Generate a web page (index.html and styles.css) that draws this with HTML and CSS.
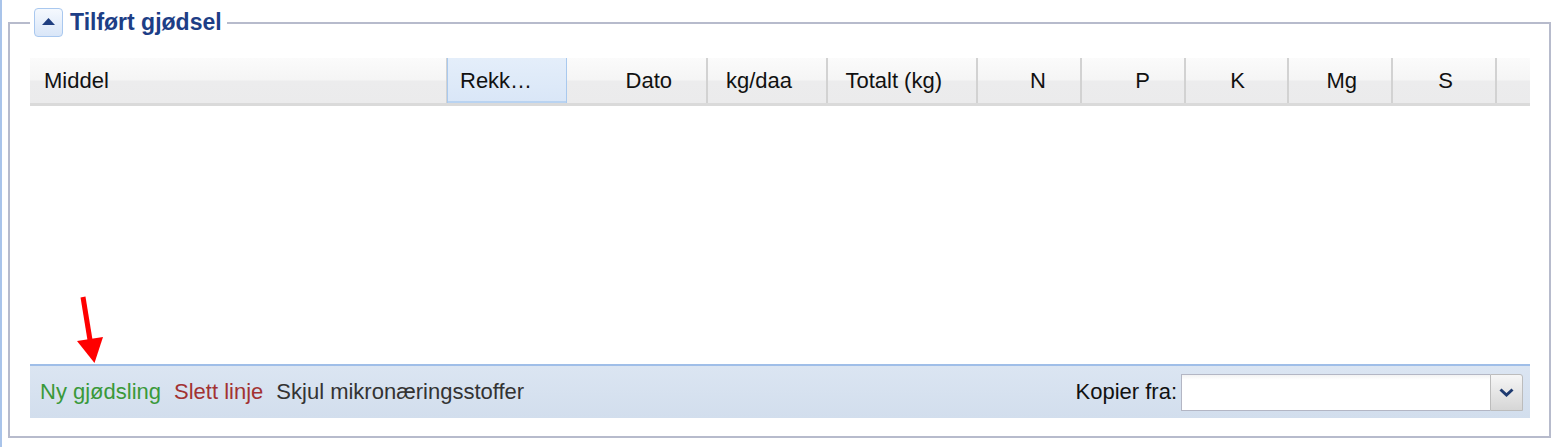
FILE: index.html
```html
<!DOCTYPE html>
<html lang="no">
<head>
<meta charset="utf-8">
<title>Tilført gjødsel</title>
<link rel="stylesheet" href="styles.css">
</head>
<body>
<div class="page">
  <fieldset class="panel">
    <legend class="panel-legend">
      <span class="legend-inner">
        <span class="toggle">
          <svg width="13" height="7" viewBox="0 0 13 7"><polygon points="0,7 6.5,0 13,7" fill="#1f3e80"/></svg>
        </span>
        <span class="panel-title">Tilført gjødsel</span>
      </span>
    </legend>
    <div class="grid">
      <div class="grid-head">
        <div class="hcell h-left">Middel</div>
        <div class="hcell h-left h-active">Rekk…</div>
        <div class="hcell h-right">Dato</div>
        <div class="hcell h-right">kg/daa</div>
        <div class="hcell h-right">Totalt (kg)</div>
        <div class="hcell h-right">N</div>
        <div class="hcell h-right">P</div>
        <div class="hcell h-right h-wide">K</div>
        <div class="hcell h-right">Mg</div>
        <div class="hcell h-right h-wide">S</div>
        <div class="hcell h-filler"></div>
      </div>
      <div class="grid-body"></div>
      <div class="grid-foot">
        <div class="actions">
          <span class="act act-new">Ny gjødsling</span>
          <span class="act act-del">Slett linje</span>
          <span class="act act-hide">Skjul mikronæringsstoffer</span>
        </div>
        <div class="copy">
          <span class="copy-label">Kopier fra:</span>
          <div class="combo">
            <div class="combo-input"></div>
            <div class="combo-btn">
              <svg width="15" height="9" viewBox="0 0 15 9"><polyline points="1.5,1.5 7.5,7 13.5,1.5" fill="none" stroke="#1e3a70" stroke-width="3"/></svg>
            </div>
          </div>
        </div>
      </div>
    </div>
  </fieldset>
  <svg class="annot-arrow" width="40" height="80" viewBox="0 0 40 80">
    <line x1="13" y1="7" x2="20" y2="50" stroke="#ff0000" stroke-width="5"/>
    <polygon points="7,51 33,47 24.5,73" fill="#ff0000"/>
  </svg>
</div>
</body>
</html>
```

FILE: styles.css
```css
* { box-sizing: border-box; }

html, body {
  margin: 0;
  padding: 0;
  background: #ffffff;
}

body {
  font-family: "Liberation Sans", Arial, Helvetica, sans-serif;
  font-size: 22px;
  color: #111111;
}

.page {
  position: relative;
  height: 447px;
  border-left: 2px solid #a9c4ea;
  padding: 8px 6px 0 6px;
}

.panel {
  margin: 0;
  border: 2px solid #b7bbcc;
  padding: 21px 19px 18px 20px;
  min-width: 0;
}

.panel-legend {
  padding: 0 5px 0 4px;
  margin: 0;
}

.legend-inner {
  display: flex;
  align-items: center;
  gap: 7px;
}

.toggle {
  width: 29px;
  height: 29px;
  border: 1px solid #a9c8ef;
  border-radius: 4px;
  background: linear-gradient(#f5f9fe, #d9e6f8);
  display: flex;
  align-items: center;
  justify-content: center;
  padding-bottom: 3px;
}

.panel-title {
  font-weight: bold;
  font-size: 23px;
  color: #1d3e86;
  line-height: 29px;
}

.grid {
  display: flex;
  flex-direction: column;
}

.grid-head {
  display: grid;
  grid-template-columns: 418px 119px 141px 120px 150px 104px 104px 103px 104px 104px 1fr;
  height: 48px;
  background: linear-gradient(#fbfbfb 0%, #f5f5f5 48%, #ececed 52%, #ebebec 100%);
  border-bottom: 3px solid #dadada;
}

.hcell {
  display: flex;
  align-items: center;
  border-right: 2px solid #d2d2d2;
  white-space: nowrap;
  overflow: hidden;
}

.h-left {
  padding-left: 14px;
}

.h-right {
  justify-content: flex-end;
  padding-right: 34px;
}

.h-wide {
  padding-right: 42px;
}

.h-active {
  background: linear-gradient(#e4eefa, #d9e6f7);
  border-left: 1px solid #a9c9ee;
  border-right: 1px solid #a9c9ee;
  box-shadow: inset 0 -2px 0 #b9d3f1;
  padding-left: 12px;
  margin-left: -1px;
}

.h-filler {
  border-right: none;
}

.grid-body {
  height: 258px;
  background: #ffffff;
}

.grid-foot {
  height: 54px;
  border-top: 2px solid #9fbee8;
  background: linear-gradient(#dbe5f2, #d2deed);
  display: flex;
  align-items: center;
  justify-content: space-between;
  padding: 0 7px 0 10px;
}

.actions {
  display: flex;
  align-items: center;
  gap: 13px;
}

.act-new { color: #3a993a; }
.act-del { color: #a23232; }
.act-hide { color: #333333; }

.copy {
  display: flex;
  align-items: center;
  gap: 4px;
}

.copy-label {
  color: #111111;
}

.combo {
  display: flex;
  height: 37px;
}

.combo-input {
  width: 309px;
  border: 1px solid #b3b6c4;
  border-right: none;
  background: linear-gradient(#f3f3f3 0, #ffffff 5px);
}

.combo-btn {
  width: 33px;
  border: 1px solid #bcbcbc;
  border-radius: 0 3px 0 0;
  background: linear-gradient(#f6f6f6, #d6d6d6);
  display: flex;
  align-items: center;
  justify-content: center;
}

.annot-arrow {
  position: absolute;
  left: 68px;
  top: 290px;
}
```
